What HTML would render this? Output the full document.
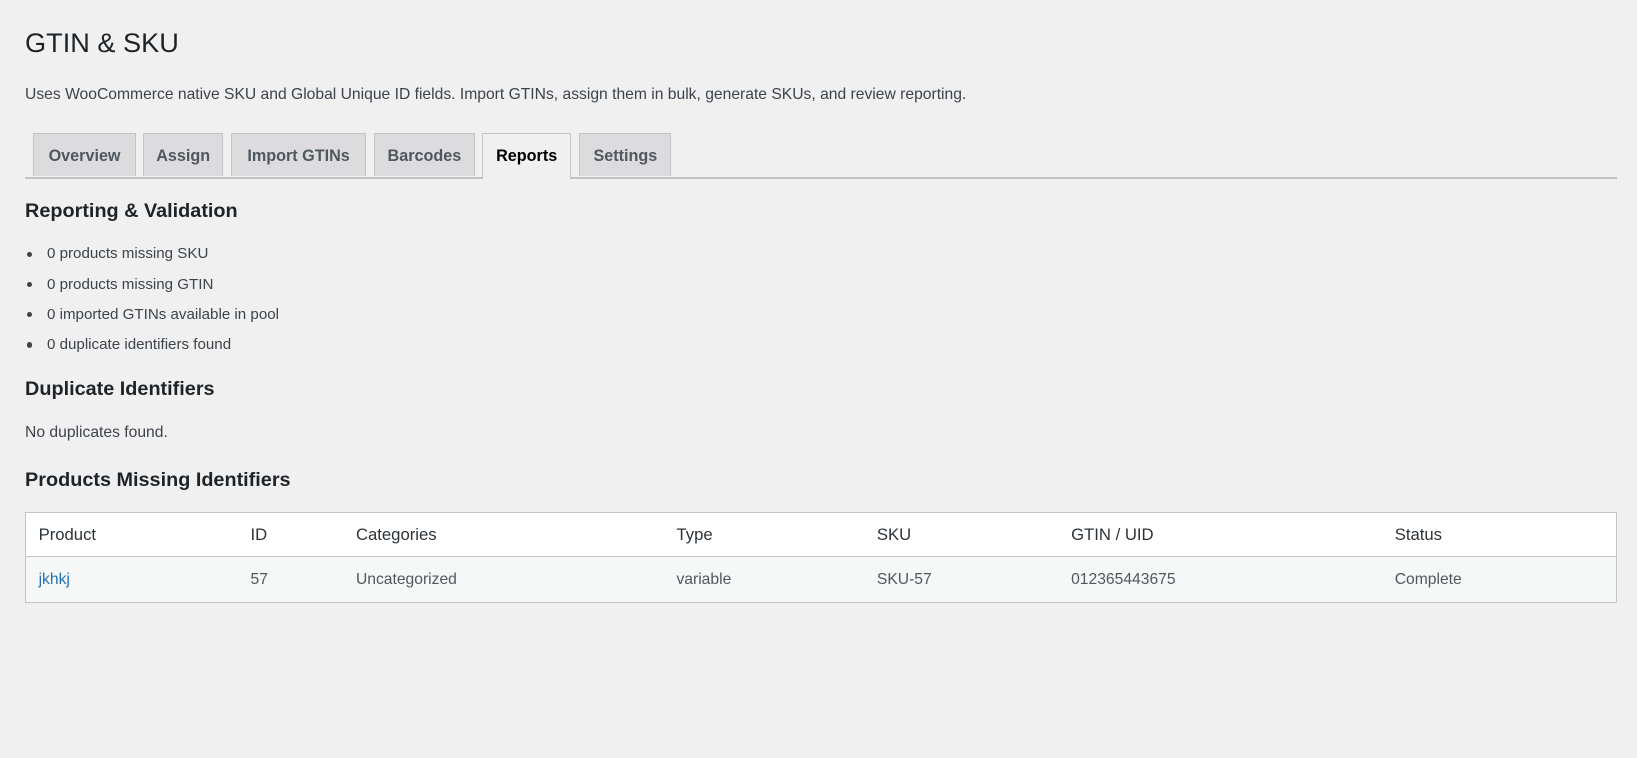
<!DOCTYPE html>
<html><head><meta charset="utf-8"><style>
html,body{margin:0;padding:0;background:#f0f0f1;}
body{width:1637px;height:758px;overflow:hidden;font-family:"Liberation Sans",sans-serif;color:#3c434a;}
#w{zoom:1.044;position:relative;width:1568px;height:726px;}
.a{position:absolute;white-space:nowrap;}
h1{position:absolute;left:24px;top:25px;margin:0;font-size:26px;font-weight:400;color:#1d2327;line-height:32px;}
.d{left:24px;top:82px;font-size:15px;}
.tab{position:absolute;top:127px;height:42px;box-sizing:border-box;border:1px solid #c3c4c7;border-bottom:none;background:#dcdcde;font-size:15.5px;font-weight:700;color:#50575e;text-align:center;line-height:44px;white-space:nowrap;}
.tab.on{background:#f0f0f1;color:#000;height:44px;}
.line{position:absolute;left:24px;top:170px;width:1525px;height:1px;background:#c3c4c7;}
h2{position:absolute;left:24px;margin:0;font-size:19px;font-weight:700;color:#1d2327;line-height:24px;}
.li{left:45px;font-size:14.5px;}
.li:before{content:"";position:absolute;left:-19px;top:6px;width:5px;height:5px;border-radius:50%;background:#3c434a;}
.t{position:absolute;left:24px;top:490px;width:1525px;height:88px;box-sizing:border-box;border:1px solid #c3c4c7;background:#fff;}
.r2{position:absolute;left:0;top:42px;width:100%;height:44px;box-sizing:border-box;background:#f6f7f7;border-top:1px solid #c3c4c7;}
.c{position:absolute;font-size:16px;color:#2c3338;}
.b{position:absolute;font-size:15px;color:#50575e;}
</style></head><body><div id="w">
<h1>GTIN &amp; SKU</h1>
<div class="a d">Uses WooCommerce native SKU and Global Unique ID fields. Import GTINs, assign them in bulk, generate SKUs, and review reporting.</div>
<div class="line"></div>
<div class="tab" style="left:32px;width:98px">Overview</div>
<div class="tab" style="left:137px;width:77px">Assign</div>
<div class="tab" style="left:221px;width:130px">Import GTINs</div>
<div class="tab" style="left:358px;width:97px">Barcodes</div>
<div class="tab on" style="left:462px;width:85px">Reports</div>
<div class="tab" style="left:555px;width:88px">Settings</div>
<h2 style="top:191px">Reporting &amp; Validation</h2>
<div class="a li" style="top:235px">0 products missing SKU</div>
<div class="a li" style="top:264px">0 products missing GTIN</div>
<div class="a li" style="top:293px">0 imported GTINs available in pool</div>
<div class="a li" style="top:322px">0 duplicate identifiers found</div>
<h2 style="top:361px">Duplicate Identifiers</h2>
<div class="a" style="left:24px;top:406px;font-size:15px">No duplicates found.</div>
<h2 style="top:448px">Products Missing Identifiers</h2>
<div class="t">
<div class="c" style="left:12px;top:12px">Product</div>
<div class="c" style="left:215px;top:12px">ID</div>
<div class="c" style="left:316px;top:12px">Categories</div>
<div class="c" style="left:623px;top:12px">Type</div>
<div class="c" style="left:815px;top:12px">SKU</div>
<div class="c" style="left:1001px;top:12px">GTIN / UID</div>
<div class="c" style="left:1311px;top:12px">Status</div>
<div class="r2">
<div class="b" style="left:12px;top:13px;color:#2271b1">jkhkj</div>
<div class="b" style="left:215px;top:13px">57</div>
<div class="b" style="left:316px;top:13px">Uncategorized</div>
<div class="b" style="left:623px;top:13px">variable</div>
<div class="b" style="left:815px;top:13px">SKU-57</div>
<div class="b" style="left:1001px;top:13px">012365443675</div>
<div class="b" style="left:1311px;top:13px">Complete</div>
</div></div>
</div></body></html>
